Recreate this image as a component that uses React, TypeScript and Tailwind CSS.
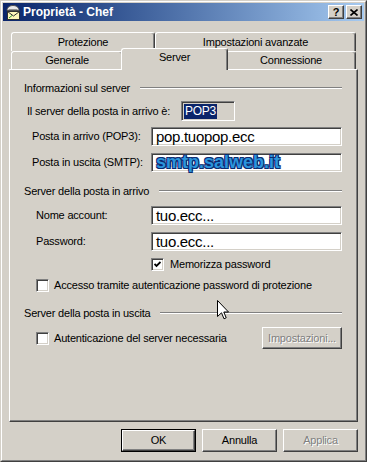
import React from "react";

const font = "text-[11px] leading-[13px] tracking-[-0.2px] whitespace-nowrap";
const label = `${font} text-black`;
const disabled = `${font} text-[#808080] [text-shadow:1px_1px_0_#ffffff]`;
const sunken =
  "border border-t-[#808080] border-l-[#808080] border-b-white border-r-white shadow-[inset_1px_1px_0_#404040,inset_-1px_-1px_0_#d4d0c8]";
const raised =
  "border border-t-white border-l-white border-b-[#404040] border-r-[#404040] shadow-[inset_-1px_-1px_0_#808080]";
const tabBase =
  "flex justify-center rounded-t-[3px] border-l border-t border-r border-l-white border-t-white border-r-[#404040] bg-[#d4d0c8] shadow-[inset_-1px_0_0_#808080]";

const AccountIcon = () => (
  <svg width="16" height="16" viewBox="0 0 16 16">
    <path d="M2 6.5C2 3 5 1.5 8 1.5s6 1.5 6 5z" fill="#e8e8e8" stroke="#505050" />
    <path d="M3.5 5.5h9" stroke="#909090" />
    <rect x="2.5" y="7.5" width="12" height="8" fill="#fff7b8" stroke="#303030" />
    <path d="M2.5 7.5l6 4.5 6-4.5" fill="none" stroke="#303030" />
    <path d="M4 14l3-2.5" stroke="#2a9a2a" />
  </svg>
);

function TitleButton({ children }: { children: React.ReactNode }) {
  return (
    <div className={`flex h-[14px] w-[16px] items-center justify-center bg-[#d4d0c8] ${raised}`}>
      {children}
    </div>
  );
}

function GroupHeader({ title }: { title: string }) {
  return (
    <div className="flex h-[14px] w-[318px] items-center gap-[10px]">
      <span className={label}>{title}</span>
      <div className="h-[2px] flex-1 border-t border-b border-t-[#808080] border-b-white" />
    </div>
  );
}

function Checkbox({ checked }: { checked?: boolean }) {
  return (
    <div className={`flex h-[13px] w-[13px] shrink-0 items-center justify-center bg-white ${sunken}`}>
      {checked && (
        <svg width="7" height="7" viewBox="0 0 7 7">
          <polyline points="0.5,3 2.5,5 6.5,1" fill="none" stroke="black" strokeWidth="1.8" />
        </svg>
      )}
    </div>
  );
}

function TextRow({ text, indent, value, bold }: { text: string; indent: string; value: string; bold?: boolean }) {
  return (
    <div className="flex h-[19px] items-center">
      <span className={`${label} ${indent}`}>{text}</span>
      <div className={`flex h-[19px] w-[191px] items-center bg-white pl-[4px] ${sunken}`}>
        {bold ? (
          <span className="text-[18px] font-bold leading-[15px] text-[#2b95dc] [text-shadow:1px_1px_0_#0b2a70,-1px_-1px_0_#0b2a70,1px_-1px_0_#0b2a70,-1px_1px_0_#0b2a70]">
            {value}
          </span>
        ) : (
          <span className="text-[15px] leading-[15px] tracking-[-0.3px] text-black">{value}</span>
        )}
      </div>
    </div>
  );
}

export default function App() {
  return (
    <div className="relative h-[462px] w-[367px] overflow-hidden bg-[#d4d0c8] font-['Liberation_Sans',Arial,sans-serif]">
      <div className="h-full w-full border border-t-[#d4d0c8] border-l-[#d4d0c8] border-b-[#404040] border-r-[#404040]">
        <div className="flex h-full w-full flex-col border border-t-white border-l-white border-b-[#808080] border-r-[#808080] p-[1px]">
          {/* title bar */}
          <div className="flex h-[18px] items-center bg-linear-to-r from-[#0a246a] to-[#a6caf0] px-[2px]">
            <AccountIcon />
            <span className="ml-[2px] text-[12px] font-bold leading-[14px] text-white">Proprietà - Chef</span>
            <div className="ml-auto flex gap-[2px]">
              <TitleButton>
                <span className="text-[11px] font-bold leading-[11px] text-black">?</span>
              </TitleButton>
              <TitleButton>
                <svg width="8" height="7" viewBox="0 0 8 7">
                  <path d="M0.5 0.5l7 6M7.5 0.5l-7 6" stroke="black" strokeWidth="1.6" />
                </svg>
              </TitleButton>
            </div>
          </div>

          {/* tabs */}
          <div className="ml-[8px] mt-[11px] flex h-[19px]">
            <div className={`${tabBase} h-[19px] w-[144px] items-center`}>
              <span className={label}>Protezione</span>
            </div>
            <div className={`${tabBase} h-[19px] w-[201px] items-center`}>
              <span className={label}>Impostazioni avanzate</span>
            </div>
          </div>
          <div className="ml-[8px] flex h-[18px] items-start">
            <div className={`${tabBase} h-[18px] w-[112px] items-center`}>
              <span className={label}>Generale</span>
            </div>
            <div className={`${tabBase} relative z-10 -mx-[2px] -mt-[3px] h-[22px] w-[107px] items-start pt-[2px]`}>
              <span className={label}>Server</span>
            </div>
            <div className={`${tabBase} h-[18px] w-[130px] items-center`}>
              <span className={label}>Connessione</span>
            </div>
          </div>

          {/* panel */}
          <div className={`ml-[6px] flex h-[353px] w-[349px] flex-col pl-[14px] ${raised}`}>
            <div className="mt-[11px]">
              <GroupHeader title="Informazioni sul server" />
            </div>
            <div className="mt-[6px] flex h-[20px] items-center">
              <span className={`${label} ml-[3px] w-[154px]`}>Il server della posta in arrivo è:</span>
              <div className={`flex h-[20px] w-[54px] items-center bg-[#d4d0c8] pl-[2px] ${sunken}`}>
                <span className="bg-[#0a246a] px-[1px] text-[12px] leading-[15px] tracking-[-0.3px] text-white">POP3</span>
              </div>
            </div>
            <div className="mt-[6px]">
              <TextRow text="Posta in arrivo (POP3):" indent="ml-[8px] w-[119px]" value="pop.tuopop.ecc" />
            </div>
            <div className="mt-[7px]">
              <TextRow text="Posta in uscita (SMTP):" indent="ml-[8px] w-[119px]" value="smtp.salweb.it" bold />
            </div>

            <div className="mt-[12px]">
              <GroupHeader title="Server della posta in arrivo" />
            </div>
            <div className="mt-[8px]">
              <TextRow text="Nome account:" indent="ml-[12px] w-[115px]" value="tuo.ecc..." />
            </div>
            <div className="mt-[7px]">
              <TextRow text="Password:" indent="ml-[12px] w-[115px]" value="tuo.ecc..." />
            </div>
            <div className="ml-[127px] mt-[7px] flex h-[13px] items-center gap-[6px]">
              <Checkbox checked />
              <span className={label}>Memorizza password</span>
            </div>
            <div className="ml-[12px] mt-[8px] flex h-[13px] items-center gap-[5px]">
              <Checkbox />
              <span className={label}>Accesso tramite autenticazione password di protezione</span>
            </div>

            <div className="mt-[14px]">
              <GroupHeader title="Server della posta in uscita" />
            </div>
            <div className="mt-[7px] flex h-[22px] w-[318px] items-center">
              <div className="ml-[12px] flex items-center gap-[5px]">
                <Checkbox />
                <span className={label}>Autenticazione del server necessaria</span>
              </div>
              <div className={`ml-auto flex h-[22px] w-[80px] items-center justify-center ${raised}`}>
                <span className={disabled}>Impostazioni...</span>
              </div>
            </div>
          </div>

          {/* buttons */}
          <div className="mt-[7px] flex justify-end gap-[6px] pr-[6px]">
            <div className="h-[23px] w-[75px] border border-black">
              <div className={`flex h-full w-full items-center justify-center ${raised}`}>
                <span className={label}>OK</span>
              </div>
            </div>
            <div className={`flex h-[23px] w-[75px] items-center justify-center ${raised}`}>
              <span className={label}>Annulla</span>
            </div>
            <div className={`flex h-[23px] w-[75px] items-center justify-center ${raised}`}>
              <span className={disabled}>Applica</span>
            </div>
          </div>
        </div>
      </div>

      {/* mouse pointer */}
      <svg className="absolute left-[217px] top-[300px]" width="12" height="20" viewBox="0 0 12 20">
        <path d="M0.5 0.5V16.5L4.5 12.8L7 18.8L9.2 17.8L6.8 12H11.5Z" fill="white" stroke="black" strokeLinejoin="miter" />
      </svg>
    </div>
  );
}
